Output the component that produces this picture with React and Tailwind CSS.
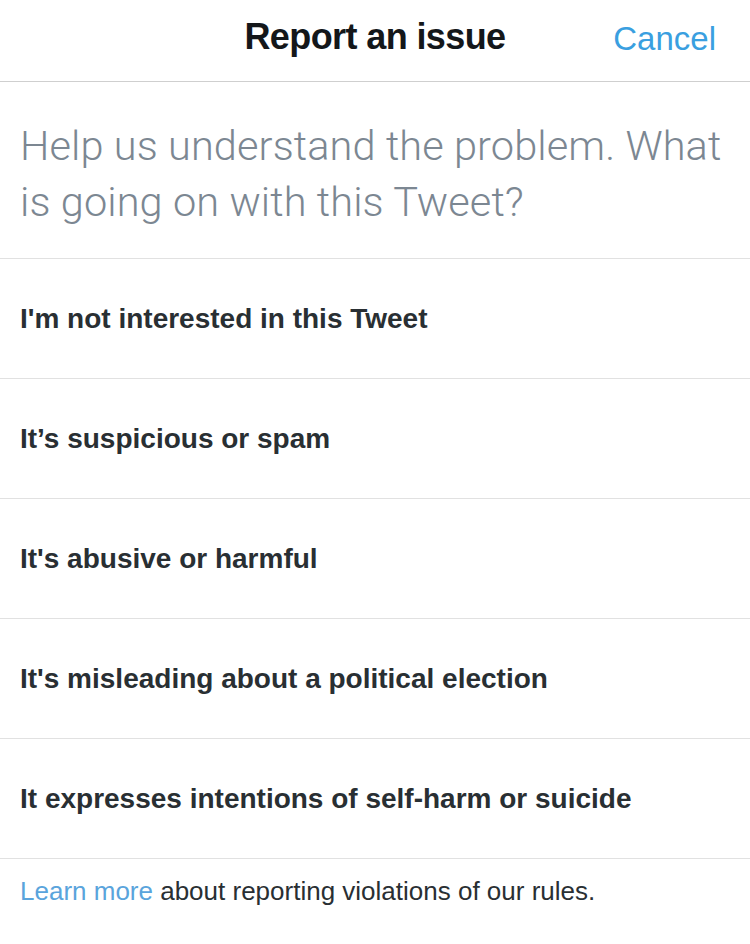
import React from "react";

const options = [
  "I'm not interested in this Tweet",
  "It\u2019s suspicious or spam",
  "It's abusive or harmful",
  "It's misleading about a political election",
  "It expresses intentions of self-harm or suicide",
];

export default function App() {
  return (
    <div className="min-h-screen bg-white font-['Liberation_Sans',Arial,sans-serif] text-[#292f33]">
      {/* header */}
      <div className="relative h-[82px] flex items-center justify-center border-b border-[#cfcfcf]">
        <h1 className="text-[36px] font-bold tracking-[-0.6px] text-[#14171a] pb-2">Report an issue</h1>
        <button className="absolute right-[34px] top-[14px] text-[33px] text-[#3a9fe0]">Cancel</button>
      </div>

      {/* prompt */}
      <div className="px-5 pt-[36px] pb-[28px] border-b border-[#e1e1e1]">
        <p className="font-['Roboto',sans-serif] text-[41.5px] leading-[56px] text-[#7c8792] font-light tracking-[0.1px]">
          Help us understand the problem. What is going on with this Tweet?
        </p>
      </div>

      {/* options */}
      <div>
        {options.map((opt, i) => (
          <div key={i} className="h-[120px] flex items-center px-5 border-b border-[#e1e1e1]">
            <span className="text-[28px] font-bold">{opt}</span>
          </div>
        ))}
      </div>

      {/* footer */}
      <div className="px-5 pt-[13px] text-[26px]">
        <a className="text-[#5aa4dc]">Learn more</a> about reporting violations of our rules.
      </div>
    </div>
  );
}
